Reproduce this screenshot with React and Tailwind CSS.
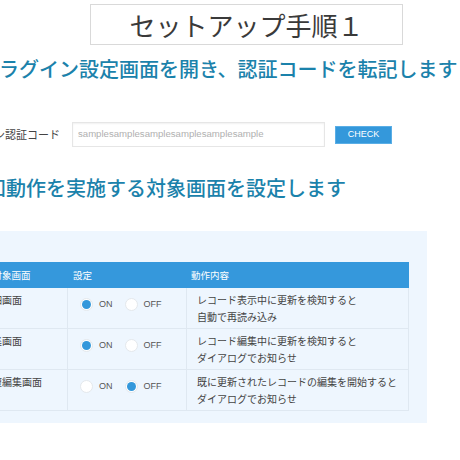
import React from "react";

const jp = { fontFamily: '"Noto Sans CJK JP", "Noto Sans", sans-serif' };
const lat = { fontFamily: '"Liberation Sans", Arial, sans-serif' };

function Radio({ on }) {
  return (
    <div className="w-[13px] h-[13px] rounded-full bg-white border border-[#e4e8ec] flex items-center justify-center shrink-0">
      {on ? <div className="w-[9px] h-[9px] rounded-full bg-[#3498db]" /> : null}
    </div>
  );
}

function Row({ name, on, l1, l2 }) {
  return (
    <div className="grid grid-cols-[131px_119px_223px] border-b border-[#dfe8f1] text-[#444] text-[10px]" style={jp}>
      <div className="pl-[6px] pt-[3px] pb-[3px] leading-[17px] whitespace-nowrap overflow-hidden">{name}</div>
      <div className="border-l border-[#dfe8f1] pl-[12px] pt-[10px] h-[40px]">
        <div className="flex items-center text-[9px] text-[#555]" style={lat}>
          <Radio on={on} />
          <span className="ml-[6px]">ON</span>
          <div className="ml-[12px]">
            <Radio on={!on} />
          </div>
          <span className="ml-[6px]">OFF</span>
        </div>
      </div>
      <div className="border-l border-r border-[#dfe8f1] pl-[10px] pt-[3px] pb-[3px] leading-[17px] whitespace-nowrap">
        <div>{l1}</div>
        <div>{l2}</div>
      </div>
    </div>
  );
}

export default function App() {
  return (
    <div className="w-[460px] h-[460px] overflow-hidden bg-white" style={jp}>
      <div className="mt-[4px] ml-[90px] w-[313px] h-[41px] border border-[#d9d9d9] flex items-center justify-center text-[26px] leading-[26px] text-[#3a3a3a]">
        セットアップ手順１
      </div>

      <div className="mt-[14px] ml-[-21px] whitespace-nowrap text-[20px] leading-[20px] font-medium text-[#1b82ab]">
        プラグイン設定画面を開き、認証コードを転記します
      </div>

      <div className="mt-[43px] ml-[-50px] flex items-center">
        <div className="w-[110px] whitespace-nowrap text-[11px] text-[#444]">プラグイン認証コード</div>
        <div
          className="ml-[12px] w-[253px] h-[25px] bg-white border border-[#e6e6e6] shadow-[inset_0_1px_2px_rgba(0,0,0,0.06)] flex items-center pl-[5px] text-[9.6px] text-[#b0b0b0]"
          style={lat}
        >
          samplesamplesamplesamplesamplesample
        </div>
        <div
          className="ml-[10px] w-[57px] h-[18px] bg-[#3498db] border border-[#5aaee6] flex items-center justify-center text-[9px] text-white"
          style={lat}
        >
          CHECK
        </div>
      </div>

      <div className="mt-[31px] ml-[-34px] whitespace-nowrap text-[20px] leading-[20px] font-medium text-[#1b82ab]">
        通知動作を実施する対象画面を設定します
      </div>

      <div className="mt-[33px] ml-[-80px] w-[507px] bg-[#eef6fe] pt-[31px] pr-[18px] pb-[12px] pl-[16px]">
        <div className="grid grid-cols-[131px_119px_223px] h-[26px] bg-[#3598dc] text-white text-[9.5px] items-center">
          <div className="pl-[9px] whitespace-nowrap">更新通知の対象画面</div>
          <div className="pl-[6px]">設定</div>
          <div className="pl-[5px]">動作内容</div>
        </div>
        <Row name="レコード詳細画面" on={true} l1="レコード表示中に更新を検知すると" l2="自動で再読み込み" />
        <Row name="レコード編集画面" on={true} l1="レコード編集中に更新を検知すると" l2="ダイアログでお知らせ" />
        <Row name="レコード重複編集画面" on={false} l1="既に更新されたレコードの編集を開始すると" l2="ダイアログでお知らせ" />
      </div>
    </div>
  );
}
